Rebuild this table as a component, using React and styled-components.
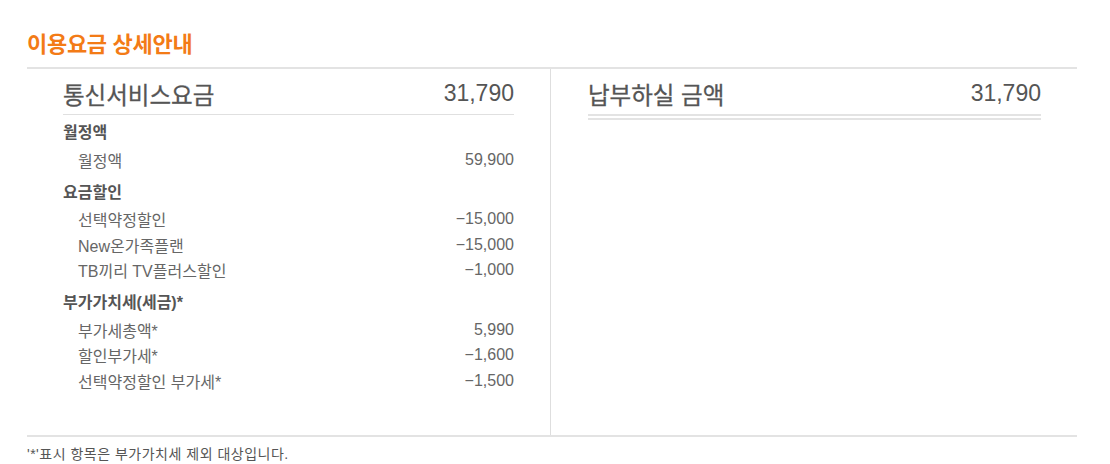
import React from "react";
import styled, { createGlobalStyle } from "styled-components";

const charges = [
  {
    title: "월정액",
    items: [{ label: "월정액", value: "59,900" }],
  },
  {
    title: "요금할인",
    items: [
      { label: "선택약정할인", value: "−15,000" },
      { label: "New온가족플랜", value: "−15,000" },
      { label: "TB끼리 TV플러스할인", value: "−1,000" },
    ],
  },
  {
    title: "부가가치세(세금)*",
    items: [
      { label: "부가세총액*", value: "5,990" },
      { label: "할인부가세*", value: "−1,600" },
      { label: "선택약정할인 부가세*", value: "−1,500" },
    ],
  },
];

const App = () => {
  return (
    <>
      <GlobalStyle />
      <Page>
        <Title>이용요금 상세안내</Title>
        <Table>
          <Column>
            <ColumnHeader>
              <HeaderLabel>통신서비스요금</HeaderLabel>
              <HeaderValue>31,790</HeaderValue>
            </ColumnHeader>
            {charges.map((group) => (
              <Group key={group.title}>
                <GroupTitle>{group.title}</GroupTitle>
                {group.items.map((item) => (
                  <Row key={item.label}>
                    <RowLabel>{item.label}</RowLabel>
                    <RowValue>{item.value}</RowValue>
                  </Row>
                ))}
              </Group>
            ))}
          </Column>
          <Column $right>
            <ColumnHeader $double>
              <HeaderLabel>납부하실 금액</HeaderLabel>
              <HeaderValue>31,790</HeaderValue>
            </ColumnHeader>
          </Column>
        </Table>
        <Note>'*'표시 항목은 부가가치세 제외 대상입니다.</Note>
      </Page>
    </>
  );
};

const GlobalStyle = createGlobalStyle`
  body {
    margin: 0;
    background: #fff;
    font-family: "Liberation Sans", "Noto Sans CJK KR", sans-serif;
    color: #666;
  }
`;

const Page = styled.div`
  width: 1050px;
  padding: 31px 0 0 27px;
`;

const Title = styled.h2`
  margin: 0;
  font-size: 22px;
  line-height: 28px;
  font-weight: bold;
  color: #f37b16;
  letter-spacing: -0.3px;
`;

const Table = styled.div`
  display: grid;
  grid-template-columns: 523px 1fr;
  margin-top: 8px;
  border-top: 2px solid #e3e3e3;
  border-bottom: 2px solid #e3e3e3;
`;

const Column = styled.div`
  padding: 0 36px 41px ${(p) => (p.$right ? "37px" : "36px")};
  border-left: ${(p) => (p.$right ? "1px solid #dedede" : "none")};
`;

const ColumnHeader = styled.div`
  display: flex;
  justify-content: space-between;
  align-items: center;
  height: 33px;
  padding: 8px 0 4px;
  border-bottom: ${(p) => (p.$double ? "6px double #e3e3e3" : "1px solid #e0e0e0")};
  margin-bottom: ${(p) => (p.$double ? "0" : "5px")};
`;

const HeaderLabel = styled.span`
  font-size: 23.5px;
  color: #555;
  -webkit-text-stroke: 0.3px #555;
`;

const HeaderValue = styled.span`
  font-size: 23px;
  color: #555;
`;

const Group = styled.div`
  & + & {
    margin-top: 7px;
  }
`;

const GroupTitle = styled.div`
  font-size: 16px;
  font-weight: bold;
  line-height: 26px;
  color: #555;
  margin-bottom: 1px;
`;

const Row = styled.div`
  display: flex;
  justify-content: space-between;
  align-items: center;
  height: 25.5px;
  padding-left: 15px;
`;

const RowLabel = styled.span`
  font-size: 16px;
  color: #666;
`;

const RowValue = styled.span`
  font-size: 16px;
  color: #666;
`;

const Note = styled.p`
  margin: 8px 0 0;
  font-size: 14px;
  line-height: 18px;
  letter-spacing: 0.5px;
  color: #555;
`;

export default App;
